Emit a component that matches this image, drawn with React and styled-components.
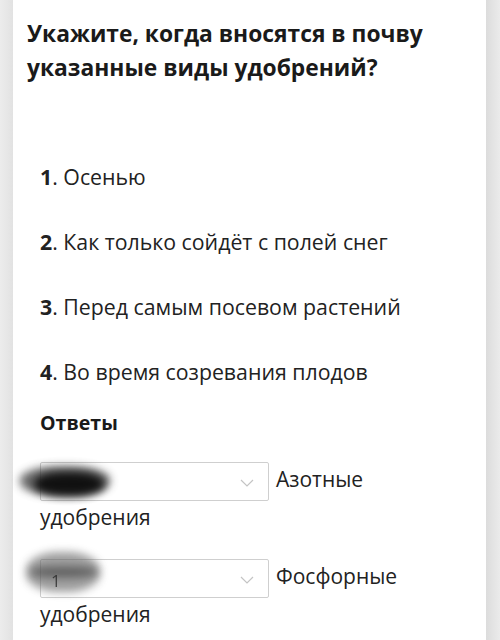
import React from "react";
import styled, { createGlobalStyle } from "styled-components";

const Global = createGlobalStyle`
  html, body { margin: 0; padding: 0; background: #e6e6e6; }
  body { font-family: "Open Sans", "Noto Sans", sans-serif; color: #1e1e1e; }
`;

const Page = styled.div`
  background: linear-gradient(to right, #ececec 0, #e2e2e2 13px, #fff 13px, #fff 486px, #dcdcdc 486px, #ebebeb 500px);
  width: 500px;
  min-height: 640px;
`;

const Card = styled.div`
  margin: 0 14px 0 13px;
  background: #fff;
  padding: 17px 0 20px 14px;
  min-height: 640px;
  box-sizing: border-box;
`;

const Title = styled.h1`
  margin: 0;
  font-size: 22.8px;
  line-height: 34px;
  font-weight: 700;
  color: #1a1a1a;
`;

const List = styled.div`
  display: flex;
  flex-direction: column;
  gap: 35px;
  margin-top: 77px;
  padding-left: 13px;
`;

const Item = styled.div`
  font-size: 21.3px;
  line-height: 30px;
  color: #222;
`;

const Num = styled.b`
  font-weight: 700;
`;

const Heading = styled.div`
  margin-top: 22px;
  padding-left: 13px;
  font-size: 19.6px;
  line-height: 28px;
  font-weight: 700;
  color: #1a1a1a;
`;

const Answers = styled.div`
  padding-left: 13px;
  margin-top: 25px;
  display: flex;
  flex-direction: column;
  gap: 25px;
`;

const Answer = styled.div`
  position: relative;
  font-size: 21px;
  line-height: 33px;
  color: #222;
  padding-right: 60px;
`;

const SelectBox = styled.span`
  display: inline-flex;
  align-items: center;
  justify-content: space-between;
  box-sizing: border-box;
  width: 229px;
  height: 39px;
  border: 1px solid #cfcfcf;
  border-radius: 2px;
  background: #fff;
  padding: 3px 14px 0 10px;
  margin-right: 7px;
  vertical-align: middle;
  font-size: 17px;
`;

const Value = styled.span`
  position: relative;
  z-index: 1;
  color: #2a2a2a;
  opacity: 0.8;
`;

const Chevron = styled.svg`
  width: 14px;
  height: 8px;
`;

const Blob = styled.span`
  position: absolute;
  left: ${p => p.$left}px;
  top: ${p => p.$top}px;
  width: ${p => p.$w}px;
  height: ${p => p.$h}px;
  border-radius: 45%;
  background: ${p => p.$color};
  filter: blur(4px);
  opacity: ${p => p.$op};
  pointer-events: none;
`;

const answers = [
  { label: "Азотные", value: "", blobs: [
    { left: -20, top: 4, w: 90, h: 30, color: "#3a3a3a", op: 0.75 },
    { left: -6, top: 10, w: 70, h: 24, color: "#0c0c0c", op: 0.95 },
  ] },
  { label: "Фосфорные", value: "1", blobs: [
    { left: -14, top: -7, w: 74, h: 40, color: "#6a6a6a", op: 0.65 },
    { left: -10, top: 8, w: 68, h: 10, color: "#333", op: 0.6 },
  ] },
];

export default function App() {
  return (
    <Page>
      <Global />
      <Card>
        <Title>Укажите, когда вносятся в почву указанные виды удобрений?</Title>
        <List>
          <Item><Num>1</Num>. Осенью</Item>
          <Item><Num>2</Num>. Как только сойдёт с полей снег</Item>
          <Item><Num>3</Num>. Перед самым посевом растений</Item>
          <Item><Num>4</Num>. Во время созревания плодов</Item>
        </List>
        <Heading>Ответы</Heading>
        <Answers>
          {answers.map((a, i) => (
            <Answer key={i}>
              <SelectBox>
                <Value>{a.value}</Value>
                <Chevron viewBox="0 0 14 8">
                  <path d="M1 1 L7 7 L13 1" fill="none" stroke="#c4c4c4" strokeWidth="1.2" />
                </Chevron>
              </SelectBox>
              {a.label} удобрения
              {a.blobs.map((b, j) => (
                <Blob key={j} $left={b.left} $top={b.top} $w={b.w} $h={b.h} $color={b.color} $op={b.op} />
              ))}
            </Answer>
          ))}
        </Answers>
      </Card>
    </Page>
  );
}
